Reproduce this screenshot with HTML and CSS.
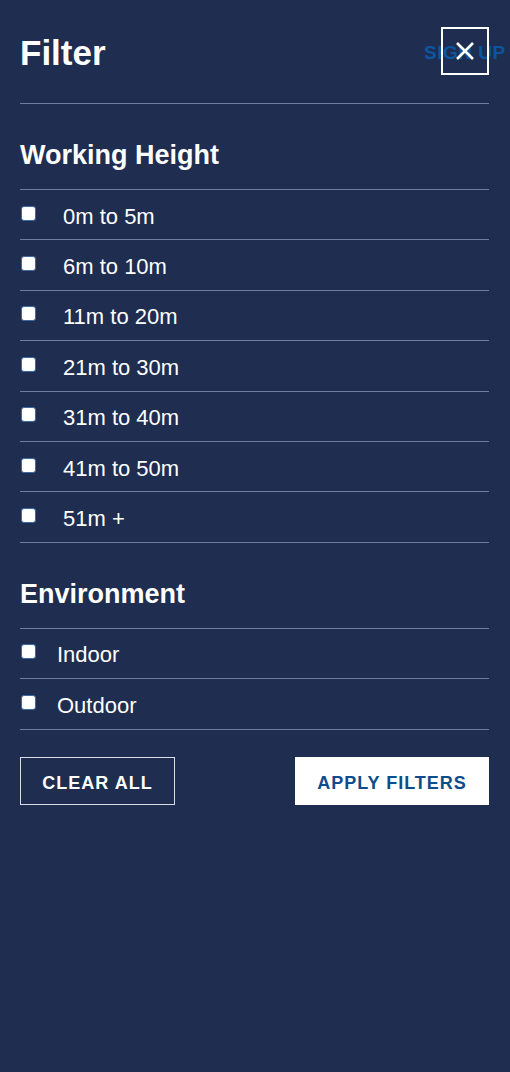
FILE: index.html
```html
<!DOCTYPE html>
<html lang="en">
<head>
<meta charset="utf-8">
<title>Filter</title>
<link rel="stylesheet" href="styles.css">
</head>
<body>
<div class="panel">
  <header class="head">
    <h1 class="title">Filter</h1>
    <a class="signup" href="#">SIGN UP</a>
    <button class="close" type="button" aria-label="Close">
      <svg width="20" height="20" viewBox="0 0 20 20"><path d="M2 2 L18 18 M18 2 L2 18" stroke="#fff" stroke-width="2.6" fill="none"/></svg>
    </button>
  </header>

  <section class="group">
    <h2 class="group-title">Working Height</h2>
    <ul class="opts">
      <li class="opt"><input class="cb" type="checkbox"><span class="lbl">0m to 5m</span></li>
      <li class="opt"><input class="cb" type="checkbox"><span class="lbl">6m to 10m</span></li>
      <li class="opt"><input class="cb" type="checkbox"><span class="lbl">11m to 20m</span></li>
      <li class="opt"><input class="cb" type="checkbox"><span class="lbl">21m to 30m</span></li>
      <li class="opt"><input class="cb" type="checkbox"><span class="lbl">31m to 40m</span></li>
      <li class="opt"><input class="cb" type="checkbox"><span class="lbl">41m to 50m</span></li>
      <li class="opt"><input class="cb" type="checkbox"><span class="lbl">51m +</span></li>
    </ul>
  </section>

  <section class="group">
    <h2 class="group-title">Environment</h2>
    <ul class="opts">
      <li class="opt"><input class="cb" type="checkbox"><span class="lbl lbl-env">Indoor</span></li>
      <li class="opt"><input class="cb" type="checkbox"><span class="lbl lbl-env">Outdoor</span></li>
    </ul>
  </section>

  <div class="actions">
    <button class="btn btn-clear" type="button">CLEAR ALL</button>
    <button class="btn btn-apply" type="button">APPLY FILTERS</button>
  </div>
</div>
</body>
</html>
```

FILE: styles.css
```css
* { box-sizing: border-box; }
html, body {
  margin: 0;
  padding: 0;
  background: #1e2d50;
  height: 100%;
}
body {
  font-family: "Liberation Sans", Arial, sans-serif;
  color: #fff;
  overflow: hidden;
}
.panel {
  padding: 0 21px 0 20px;
}
.head {
  position: relative;
  display: flex;
  align-items: center;
  justify-content: space-between;
  padding: 27px 0 28px;
  border-bottom: 1px solid #6f7c9c;
}
.title {
  margin: 4px 0 0;
  font-size: 35px;
  line-height: 40px;
  font-weight: 700;
}
.signup {
  position: absolute;
  left: 404px;
  top: 42px;
  font-size: 19px;
  letter-spacing: 0.5px;
  font-weight: 700;
  color: #0c55a0;
  text-decoration: none;
  white-space: nowrap;
  line-height: 22px;
}
.close {
  position: relative;
  width: 48px;
  height: 48px;
  border: 2px solid #fff;
  background: transparent;
  display: flex;
  align-items: center;
  justify-content: center;
  padding: 0;
  margin: 0;
}
.group-title {
  margin: 0;
  padding: 36px 0 18px;
  font-size: 27px;
  line-height: 31px;
  font-weight: 700;
  border-bottom: 1px solid #6f7c9c;
}
.opts {
  list-style: none;
  margin: 0;
  padding: 0;
}
.opt {
  display: flex;
  align-items: center;
  height: 50.4px;
  border-bottom: 1px solid #6f7c9c;
}
.cb {
  appearance: none;
  -webkit-appearance: none;
  margin: -3px 0 0 1px;
  width: 15px;
  height: 15px;
  background: #fff;
  border: 1px solid #3c6ba3;
  border-radius: 3px;
  flex: none;
}
.lbl {
  margin: 4px 0 0 27px;
  font-size: 22px;
  line-height: 24px;
}
.lbl-env {
  margin-left: 21px;
}
.actions {
  display: flex;
  justify-content: space-between;
  margin-top: 27px;
}
.btn {
  height: 48px;
  padding: 6px 0 0;
  text-align: center;
  white-space: nowrap;
  font-family: "Liberation Sans", Arial, sans-serif;
  font-size: 18px;
  font-weight: 700;
  letter-spacing: 1px;
  margin: 0;
}
.btn-clear {
  width: 155px;
  background: transparent;
  color: #fff;
  border: 1px solid #d8dce6;
}
.btn-apply {
  width: 194px;
  background: #fff;
  color: #0f4c8a;
  border: 1px solid #fff;
}
```
